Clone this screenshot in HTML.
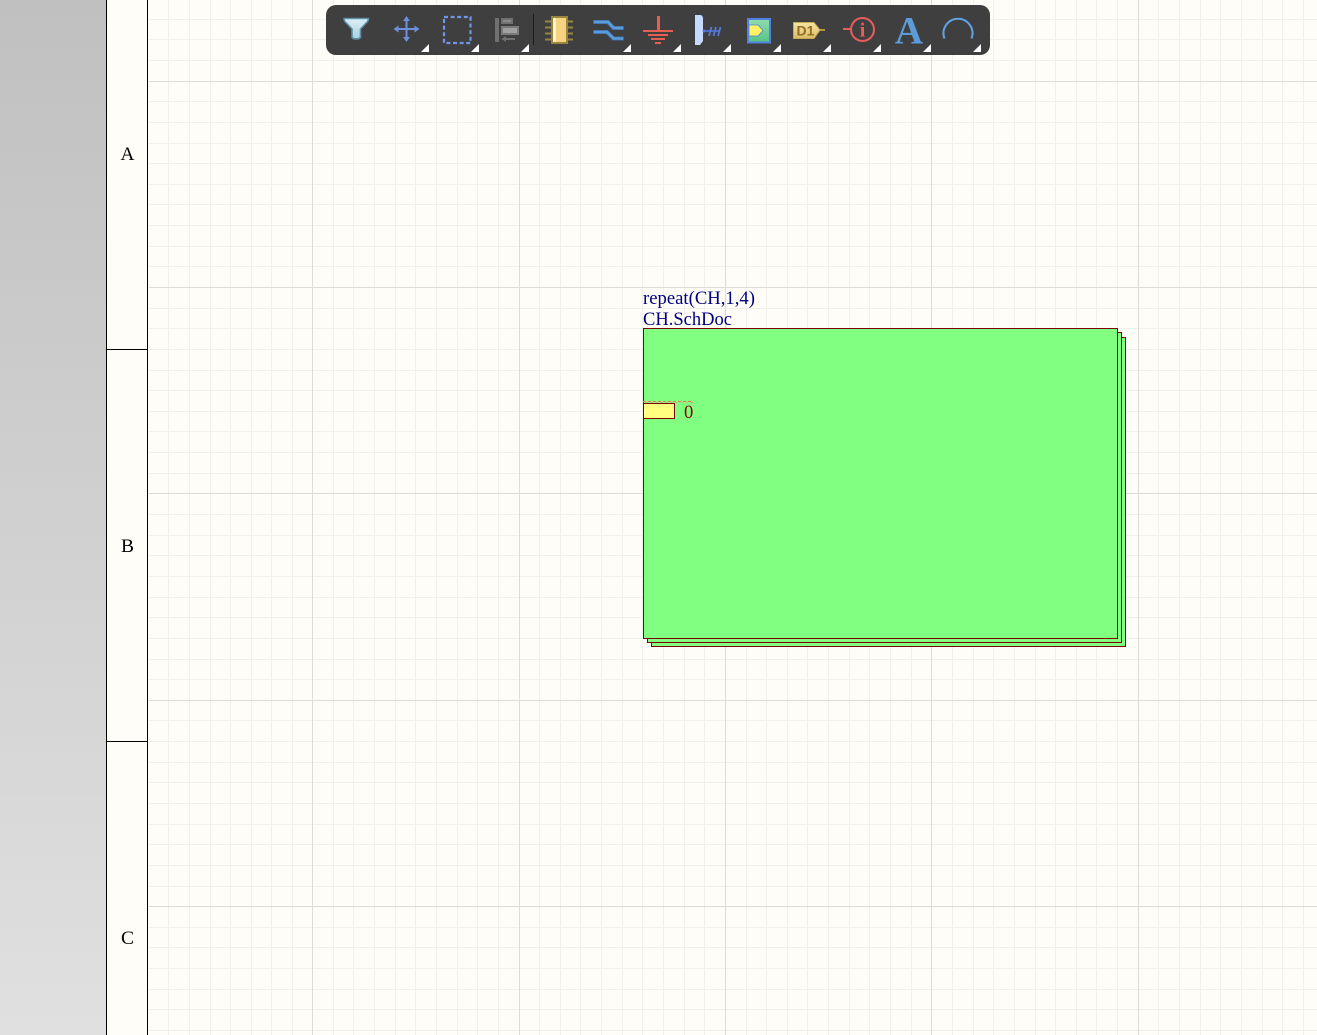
<!DOCTYPE html>
<html>
<head>
<meta charset="utf-8">
<style>
html,body{margin:0;padding:0;width:1317px;height:1035px;overflow:hidden;background:#fffdf8}
svg{display:block;position:absolute;left:0;top:0}
text{font-family:"Liberation Serif",serif}
</style>
</head>
<body>
<svg width="1317" height="1035" viewBox="0 0 1317 1035" xmlns="http://www.w3.org/2000/svg">
<defs>
<linearGradient id="side" x1="0" y1="0" x2="0" y2="1"><stop offset="0" stop-color="#c0c0c0"/><stop offset="1" stop-color="#e0e0e0"/></linearGradient>
<linearGradient id="fun" x1="0" y1="0" x2="0" y2="1"><stop offset="0" stop-color="#dcf0f6"/><stop offset="1" stop-color="#a8d0e0"/></linearGradient>
<linearGradient id="sym" x1="0" y1="0" x2="0" y2="1"><stop offset="0" stop-color="#90dcae"/><stop offset="1" stop-color="#54c484"/></linearGradient>
<linearGradient id="d1" x1="0" y1="0" x2="0" y2="1"><stop offset="0" stop-color="#f6e4a4"/><stop offset="1" stop-color="#dcbc64"/></linearGradient>
</defs>

<rect x="0" y="0" width="106" height="1035" fill="url(#side)"/>
<rect x="106" y="0" width="1211" height="1035" fill="#fffdf8"/>

<g shape-rendering="crispEdges" fill="none" stroke-width="1">
<path stroke="#f1f0ea" d="M168.5 0V1035M189.5 0V1035M210.5 0V1035M230.5 0V1035M251.5 0V1035M271.5 0V1035M292.5 0V1035M333.5 0V1035M353.5 0V1035M374.5 0V1035M395.5 0V1035M415.5 0V1035M436.5 0V1035M457.5 0V1035M477.5 0V1035M498.5 0V1035M539.5 0V1035M560.5 0V1035M580.5 0V1035M601.5 0V1035M622.5 0V1035M642.5 0V1035M663.5 0V1035M684.5 0V1035M704.5 0V1035M746.5 0V1035M766.5 0V1035M787.5 0V1035M807.5 0V1035M828.5 0V1035M849.5 0V1035M869.5 0V1035M890.5 0V1035M911.5 0V1035M952.5 0V1035M973.5 0V1035M993.5 0V1035M1014.5 0V1035M1035.5 0V1035M1055.5 0V1035M1076.5 0V1035M1096.5 0V1035M1117.5 0V1035M1158.5 0V1035M1179.5 0V1035M1200.5 0V1035M1220.5 0V1035M1241.5 0V1035M1262.5 0V1035M1282.5 0V1035M1303.5 0V1035"/>
<path stroke="#f1f0ea" d="M149 19.5H1317M149 39.5H1317M149 60.5H1317M149 101.5H1317M149 122.5H1317M149 143.5H1317M149 163.5H1317M149 184.5H1317M149 204.5H1317M149 225.5H1317M149 246.5H1317M149 266.5H1317M149 308.5H1317M149 328.5H1317M149 349.5H1317M149 370.5H1317M149 390.5H1317M149 411.5H1317M149 431.5H1317M149 452.5H1317M149 473.5H1317M149 514.5H1317M149 535.5H1317M149 555.5H1317M149 576.5H1317M149 597.5H1317M149 617.5H1317M149 638.5H1317M149 659.5H1317M149 679.5H1317M149 720.5H1317M149 741.5H1317M149 762.5H1317M149 782.5H1317M149 803.5H1317M149 824.5H1317M149 844.5H1317M149 865.5H1317M149 886.5H1317M149 927.5H1317M149 947.5H1317M149 968.5H1317M149 989.5H1317M149 1009.5H1317M149 1030.5H1317"/>
<path stroke="#dddcd6" d="M312.5 0V1035M519.5 0V1035M725.5 0V1035M931.5 0V1035M1138.5 0V1035M149 81.5H1317M149 287.5H1317M149 493.5H1317M149 700.5H1317M149 906.5H1317"/>
<path stroke="#000" d="M106.5 0V1035M147.5 0V1035M107 349.5H147M107 741.5H147"/>
</g>

<g font-size="18.500" fill="#000" text-anchor="middle">
<text x="127.500" y="160" textLength="14" lengthAdjust="spacingAndGlyphs">A</text>
<text x="127.500" y="552" textLength="13" lengthAdjust="spacingAndGlyphs">B</text>
<text x="127.500" y="944" textLength="13" lengthAdjust="spacingAndGlyphs">C</text>
</g>

<!-- sheet symbols -->
<g shape-rendering="crispEdges" fill="#80ff80" stroke="#800000" stroke-width="1">
<rect x="651.5" y="337.5" width="474" height="309"/>
<rect x="647.5" y="332.5" width="474" height="310"/>
<rect x="643.5" y="328.5" width="474" height="310"/>
<rect x="643.5" y="403.5" width="31" height="15" fill="#ffff80"/>
</g>
<g shape-rendering="crispEdges" fill="none" stroke="#ee7850" stroke-width="1">
<path d="M643 401.5H693" stroke-dasharray="3 2"/>
<path d="M646 402.500H693" stroke-dasharray="2 3" stroke="#c8b870"/>
</g>
<path d="M644 410h1v1h-1zM644 412h1v1h-1z" fill="#fff" opacity=".7"/>
<text x="643" y="304" font-size="18.600" fill="#000080" textLength="112" lengthAdjust="spacingAndGlyphs">repeat(CH,1,4)</text>
<text x="643" y="325" font-size="18.600" fill="#000080" textLength="89" lengthAdjust="spacingAndGlyphs">CH.SchDoc</text>
<text x="684" y="418" font-size="18.600" fill="#900000">0</text>

<!-- toolbar -->
<rect x="326" y="5" width="664" height="50" rx="10" ry="10" fill="#3f3f3f"/>
<path d="M421 52L429 44V52ZM471 52L479 44V52ZM521 52L529 44V52ZM623 52L631 44V52ZM673 52L681 44V52ZM723 52L731 44V52ZM773 52L781 44V52ZM823 52L831 44V52ZM873 52L881 44V52ZM923 52L931 44V52ZM973 52L981 44V52Z" fill="#fff"/>
<rect x="533" y="14" width="1" height="31" fill="#1c1c1c"/>

<!-- filter -->
<path d="M344 18.5H368.5L368 21L360.5 29V37.5L358.5 38.8H354L352 37.5V29L344.5 21Z" fill="url(#fun)" stroke="#5f8ea6" stroke-width="1.6" stroke-linejoin="round"/>
<!-- move -->
<path d="M406.5 19V39M396 29H417" stroke="#6d90dc" stroke-width="2" fill="none"/>
<path d="M406.5 16L410 21H403ZM406.5 42L410 37H403ZM393.5 29L398.5 25.5V32.5ZM419.5 29L414.5 25.5V32.5Z" fill="#6d90dc"/>
<!-- select -->
<rect x="444" y="17" width="26.5" height="26" fill="none" stroke="#6f95e8" stroke-width="2.2" stroke-dasharray="4 2.6"/>
<!-- align -->
<g shape-rendering="crispEdges">
<rect x="495" y="18" width="4" height="24" fill="#707070"/>
<rect x="501" y="18" width="12" height="6" fill="#707070"/><rect x="503" y="20" width="8" height="2" fill="#8a8a8a"/>
<rect x="501" y="26" width="18" height="9" fill="#7a7a7a"/><rect x="503" y="28" width="14" height="5" fill="#a0a0a0"/>
<rect x="505" y="38" width="10" height="2" fill="#707070"/>
</g>
<path d="M501.5 39L506 36V42Z" fill="#707070"/>
<!-- chip -->
<path d="M545 21.5H573M545 27.5H573M545 33.5H573M545 39.5H573" stroke="#9a8540" stroke-width="2"/>
<rect x="552" y="17" width="15" height="26" fill="#f6d47f" stroke="#9a8540" stroke-width="2"/>
<rect x="553" y="18" width="3" height="24" fill="#fff3d0"/>
<!-- bus -->
<path d="M593.5 22H608L613.5 28H623.5M593.5 32H607L613.5 38.5H623.5" fill="none" stroke="#3f6fa8" stroke-width="4"/>
<path d="M593.5 22H608L613.5 28H623.5M593.5 32H607L613.5 38.5H623.5" fill="none" stroke="#5a9cdc" stroke-width="2.600"/>
<!-- ground -->
<g fill="#e85f52" shape-rendering="crispEdges">
<rect x="657" y="16" width="3" height="15"/>
<rect x="643" y="30" width="30" height="2"/>
<rect x="648" y="34" width="20" height="2"/>
<rect x="651" y="38" width="14" height="2"/>
<rect x="655" y="42" width="6" height="2"/>
</g>
<!-- harness -->
<path d="M695 15H700Q703 15 703 19V41L700 45H695Z" fill="#c6dcff"/>
<path d="M703 31H720" stroke="#5578dc" stroke-width="1.5"/>
<circle cx="704" cy="31" r="1.5" fill="#5578dc"/>
<path d="M709 36L711.5 27M713.5 36L716 27M718 36L720.5 27" stroke="#5578dc" stroke-width="1.8" fill="none"/>
<!-- sheet symbol icon -->
<rect x="748" y="19" width="22" height="23.5" fill="url(#sym)" stroke="#5080e0" stroke-width="2"/>
<path d="M749 25H758L763 30.5L758 36H749Z" fill="#fff264" stroke="#5080e0" stroke-width=".8"/>
<!-- D1 -->
<path d="M816 30H825" stroke="#b39440" stroke-width="2"/>
<path d="M793.5 22.5H814L820 30L814 38.5H793.5Z" fill="url(#d1)" stroke="#c8a850" stroke-width="1"/>
<text x="796.500" y="35.500" font-size="14" font-weight="bold" fill="#8e6e28" style="font-family:'Liberation Sans',sans-serif">D1</text>
<!-- info -->
<circle cx="862.5" cy="29.5" r="11.5" fill="none" stroke="#e85c5c" stroke-width="2"/>
<path d="M843 29H851" stroke="#e85c5c" stroke-width="2"/>
<text x="862.5" y="36.5" font-size="20" font-weight="bold" fill="#e85c5c" text-anchor="middle">i</text>
<!-- A -->
<text x="909" y="43.5" font-size="39" font-weight="bold" fill="#5c9ad8" text-anchor="middle">A</text>
<!-- arc -->
<path d="M944.5 38.500A14.500 14.500 0 1 1 971.5 38.500" fill="none" stroke="#62a0e0" stroke-width="2"/>
</svg>
</body>
</html>
